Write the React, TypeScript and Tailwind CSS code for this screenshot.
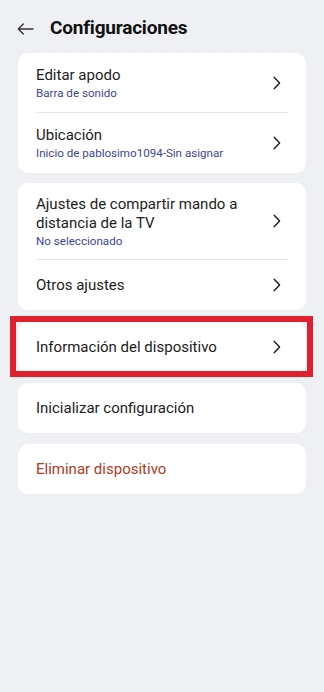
import { ReactNode } from "react";

function Chevron() {
  return (
    <svg width="8" height="14" viewBox="0 0 8 14" fill="none" className="shrink-0">
      <path d="M1.2 1.2 6.6 7l-5.4 5.8" stroke="#1a1a1a" strokeWidth="1.4" strokeLinecap="round" strokeLinejoin="round" />
    </svg>
  );
}

function Row({ title, sub, h, chevron = true, danger = false }: { title: ReactNode; sub?: string; h: string; chevron?: boolean; danger?: boolean }) {
  return (
    <div className={`flex items-center justify-between pl-[18px] pr-[25px] ${h}`}>
      <div className="flex flex-col pt-px">
        <span className={`text-[15px] leading-[19px] ${danger ? "text-[#b03a22]" : "text-[#1c1c1c]"}`}>{title}</span>
        {sub && <span className="text-[11.6px] leading-[15px] text-[#3d4596] mt-px">{sub}</span>}
      </div>
      {chevron && <Chevron />}
    </div>
  );
}

function Divider() {
  return <div className="mx-[18px] h-px bg-[#e4e5ea]" />;
}

export default function App() {
  return (
    <div className="min-h-[692px] w-[324px] bg-[#eff0f4] font-['Roboto',sans-serif]">
      <div className="flex h-[56px] items-center pl-[17px] pt-[1px]">
        <svg width="17" height="12" viewBox="0 0 17 12" fill="none">
          <path d="M16 6H1.5M6.3 1 1.3 6l5 5" stroke="#333" strokeWidth="1.3" strokeLinecap="round" strokeLinejoin="round" />
        </svg>
        <h1 className="ml-4 text-[19px] font-bold text-[#111] tracking-[-0.2px]">Configuraciones</h1>
      </div>

      <div className="flex flex-col gap-[10px] px-[18px] mt-[-3px]">
        <div className="rounded-[10px] bg-white">
          <Row h="h-[59px]" title="Editar apodo" sub="Barra de sonido" />
          <Divider />
          <Row h="h-[60px]" title="Ubicación" sub="Inicio de pablosimo1094-Sin asignar" />
        </div>

        <div className="rounded-[10px] bg-white">
          <Row
            h="h-[76px]"
            title={
              <>
                Ajustes de compartir mando a<br />distancia de la TV
              </>
            }
            sub="No seleccionado"
          />
          <Divider />
          <Row h="h-[50px]" title="Otros ajustes" />
        </div>

        <div className="relative mt-[2px] rounded-[10px] bg-white">
          <Row h="h-[50px]" title="Información del dispositivo" />
          <div className="absolute -left-2 -right-[7px] -top-[6px] -bottom-[5px] border-[6px] border-[#e0202c]" />
        </div>

        <div className="rounded-[10px] bg-white mt-px">
          <Row h="h-[50px]" title="Inicializar configuración" chevron={false} />
        </div>

        <div className="rounded-[10px] bg-white mt-px">
          <Row h="h-[50px]" title="Eliminar dispositivo" chevron={false} danger />
        </div>
      </div>
    </div>
  );
}
